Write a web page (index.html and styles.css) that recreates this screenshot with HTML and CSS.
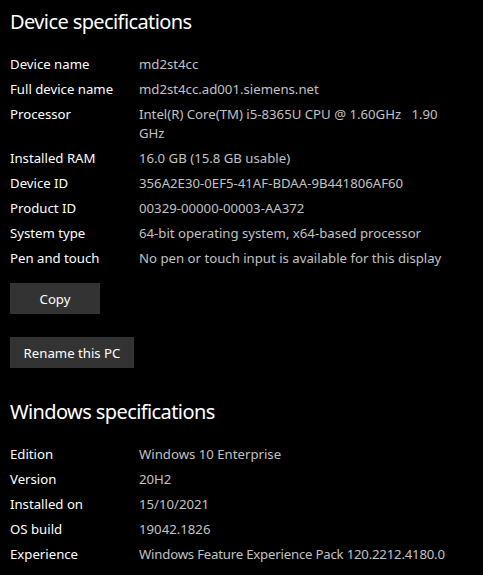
FILE: index.html
```html
<!DOCTYPE html>
<html>
<head>
<meta charset="utf-8">
<link rel="stylesheet" href="styles.css">
</head>
<body>
<main class="page">
  <h2 class="title">Device specifications</h2>
  <dl class="specs">
    <div class="row"><dt>Device name</dt><dd>md2st4cc</dd></div>
    <div class="row"><dt>Full device name</dt><dd>md2st4cc.ad001.siemens.net</dd></div>
    <div class="row"><dt>Processor</dt><dd>Intel(R) Core(TM) i5-8365U CPU @ 1.60GHz&nbsp;&nbsp;&nbsp;1.90<br>GHz</dd></div>
    <div class="row"><dt>Installed RAM</dt><dd>16.0 GB (15.8 GB usable)</dd></div>
    <div class="row"><dt>Device ID</dt><dd>356A2E30-0EF5-41AF-BDAA-9B441806AF60</dd></div>
    <div class="row"><dt>Product ID</dt><dd>00329-00000-00003-AA372</dd></div>
    <div class="row"><dt>System type</dt><dd>64-bit operating system, x64-based processor</dd></div>
    <div class="row"><dt>Pen and touch</dt><dd>No pen or touch input is available for this display</dd></div>
  </dl>
  <div class="actions">
    <button class="btn btn-copy">Copy</button>
    <button class="btn btn-rename">Rename this PC</button>
  </div>
  <h2 class="title title-win">Windows specifications</h2>
  <dl class="specs">
    <div class="row"><dt>Edition</dt><dd>Windows 10 Enterprise</dd></div>
    <div class="row"><dt>Version</dt><dd>20H2</dd></div>
    <div class="row"><dt>Installed on</dt><dd>15/10/2021</dd></div>
    <div class="row"><dt>OS build</dt><dd>19042.1826</dd></div>
    <div class="row"><dt>Experience</dt><dd class="tight">Windows Feature Experience Pack 120.2212.4180.0</dd></div>
  </dl>
</main>
</body>
</html>
```

FILE: styles.css
```css
html, body {
  margin: 0;
  padding: 0;
  background: #000;
}
body {
  font-family: "Noto Sans", "Open Sans", sans-serif;
  color: #fff;
  font-size: 13.2px;
}
.page {
  padding: 8px 10px 0 10px;
  display: flex;
  flex-direction: column;
}
.title {
  margin: 0;
  font-size: 20px;
  font-weight: 400;
  letter-spacing: -0.6px;
  line-height: 28px;
  color: #fff;
}
.title-win {
  margin-top: 30px;
}
.specs {
  margin: 16px 0 0 0;
  display: flex;
  flex-direction: column;
}
.row {
  display: grid;
  grid-template-columns: 129px 1fr;
  padding: 3px 0;
  line-height: 19px;
}
.row dt {
  margin: 0;
  color: #fff;
}
.row dd {
  margin: 0;
  color: #c2c2c2;
}
.row dd.tight {
  letter-spacing: -0.2px;
}
.actions {
  margin-top: 12px;
  display: flex;
  flex-direction: column;
  align-items: flex-start;
  gap: 23px;
}
.btn {
  font-family: inherit;
  font-size: 13.2px;
  color: #fff;
  background: #333;
  border: none;
  height: 31px;
  padding: 0 13px;
  margin: 0;
}
.btn-copy {
  width: 90px;
}
.btn-rename {
  width: 124px;
}
```
